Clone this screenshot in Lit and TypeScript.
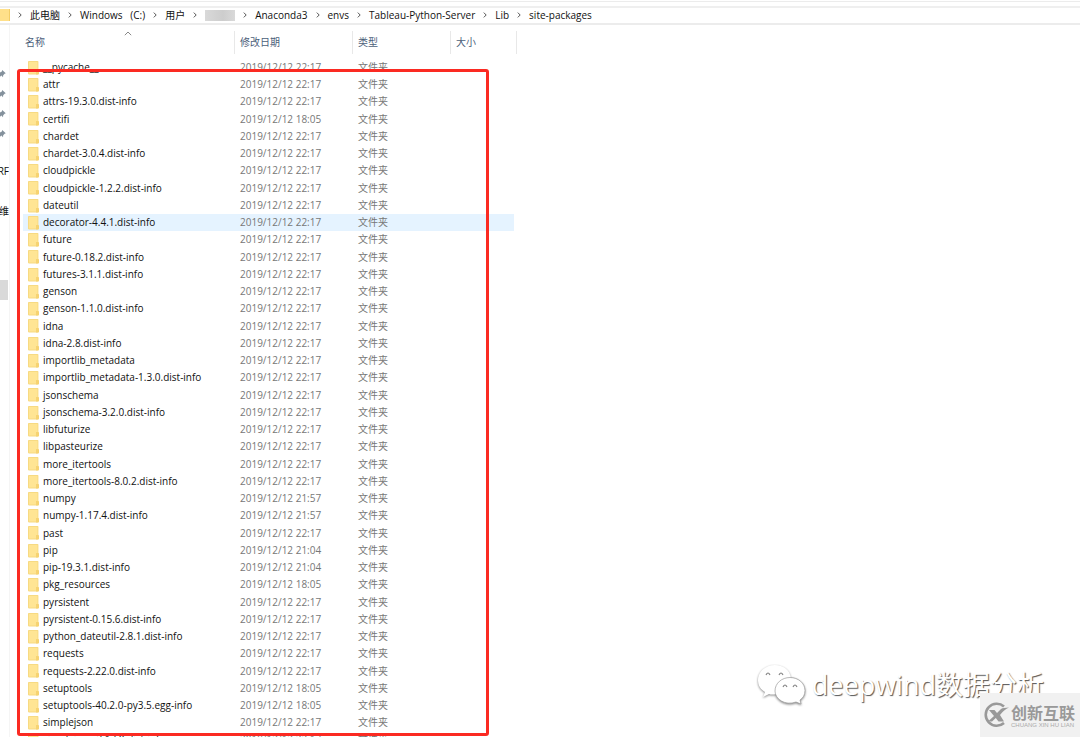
import { LitElement, html, css } from "lit";
import { customElement } from "lit/decorators.js";
import { classMap } from "lit/directives/class-map.js";

type Entry = [name: string, modified: string];

const D = "2019/12/12 22:17";
const before: Entry[] = [["__pycache__", D]];
const boxed: Entry[] = [
  ["attr", D],
  ["attrs-19.3.0.dist-info", D],
  ["certifi", "2019/12/12 18:05"],
  ["chardet", D],
  ["chardet-3.0.4.dist-info", D],
  ["cloudpickle", D],
  ["cloudpickle-1.2.2.dist-info", D],
  ["dateutil", D],
  ["decorator-4.4.1.dist-info", D],
  ["future", D],
  ["future-0.18.2.dist-info", D],
  ["futures-3.1.1.dist-info", D],
  ["genson", D],
  ["genson-1.1.0.dist-info", D],
  ["idna", D],
  ["idna-2.8.dist-info", D],
  ["importlib_metadata", D],
  ["importlib_metadata-1.3.0.dist-info", D],
  ["jsonschema", D],
  ["jsonschema-3.2.0.dist-info", D],
  ["libfuturize", D],
  ["libpasteurize", D],
  ["more_itertools", D],
  ["more_itertools-8.0.2.dist-info", D],
  ["numpy", "2019/12/12 21:57"],
  ["numpy-1.17.4.dist-info", "2019/12/12 21:57"],
  ["past", D],
  ["pip", "2019/12/12 21:04"],
  ["pip-19.3.1.dist-info", "2019/12/12 21:04"],
  ["pkg_resources", "2019/12/12 18:05"],
  ["pyrsistent", D],
  ["pyrsistent-0.15.6.dist-info", D],
  ["python_dateutil-2.8.1.dist-info", D],
  ["requests", D],
  ["requests-2.22.0.dist-info", D],
  ["setuptools", "2019/12/12 18:05"],
  ["setuptools-40.2.0-py3.5.egg-info", "2019/12/12 18:05"],
  ["simplejson", D],
];
const after: Entry[] = [["simplejson-3.17.0.dist-info", D]];
const SELECTED = "decorator-4.4.1.dist-info";
const CRUMBS = ["此电脑", "Windows   (C:)", "用户", "", "Anaconda3", "envs", "Tableau-Python-Server", "Lib", "site-packages"];

const folder = html`<svg class="folder" width="11" height="14" viewBox="0 0 11 14" aria-hidden="true">
  <rect width="10.400" height="13.400" rx=".8" fill="#f7d981" />
  <rect x=".9" y=".9" width="8.600" height="11.600" fill="#ffe594" />
  <path d="M8 9h2.200q.8 0 .8.7v3q0 .7-.8.7H8z" fill="#f6d372" />
</svg>`;

const pin = html`<svg class="pin" width="6" height="10" viewBox="0 0 6 10" aria-hidden="true">
  <path d="M2.200 1 5.800 4.200 4.600 4.700 3.200 6.200 3 8.200 1.400 6.600 0 7.800V3.400L1.900 2.600z" fill="#84919c" />
</svg>`;

const chevron = html`<svg class="chevron" width="4" height="6" viewBox="0 0 4 6" aria-hidden="true">
  <path d="M.8.6 3.200 3 .8 5.400" fill="none" stroke="#555" />
</svg>`;

@customElement("app-root")
export class AppRoot extends LitElement {
  static styles = css`
    :host {
      display: flex;
      flex-direction: column;
      height: 100vh;
      overflow: hidden;
      position: relative;
      background: #fff;
      color: #111;
      font: 10px/17px "Open Sans", "Noto Sans CJK SC", sans-serif;
    }
    .address {
      display: flex;
      align-items: center;
      flex: none;
      height: 16px;
      margin-top: 1px;
      border-top: 1px solid #ececec;
      box-shadow: inset 0 4px #fff, inset 0 6px #efefef;
      border-bottom: 2px solid #ececec;
      padding-top: 5px;
    }
    .crumbs {
      display: flex;
      align-items: center;
      margin: 0;
      padding: 0;
      list-style: none;
      white-space: pre;
    }
    .crumbs li {
      display: flex;
      align-items: center;
    }
    a {
      color: inherit;
      text-decoration: none;
    }
    .chevron {
      flex: none;
      margin: 0 8px;
    }
    .home {
      width: 10px;
      height: 12px;
      background: #ffe08a;
      border-right: 1px solid #f3cd66;
      box-sizing: border-box;
    }
    .hidden-name {
      width: 30px;
      height: 11px;
      background: linear-gradient(90deg, #d9d9d9, #cdcdcd 60%, #d9d9d9);
    }
    .main {
      display: flex;
      flex: 1;
      min-height: 0;
    }
    .side {
      flex: none;
      width: 10px;
      border-right: 1px solid #f5f5f5;
      box-sizing: border-box;
      overflow: hidden;
      padding-top: 44px;
    }
    .pin {
      display: block;
      margin-bottom: 10px;
    }
    .cut {
      display: flex;
      justify-content: flex-end;
      width: 9px;
      height: 17px;
      margin-top: 24px;
      overflow: hidden;
    }
    .cut + .cut {
      margin-top: 23px;
    }
    .thumb {
      width: 8px;
      height: 20px;
      margin-top: 60px;
      background: #d9d9d9;
    }
    .list {
      flex: 1;
      min-width: 0;
      overflow: hidden;
    }
    .files,
    .files thead,
    .files tbody {
      display: block;
    }
    .row,
    .head {
      display: grid;
      grid-template-columns: 211px 118px 98px 66px;
    }
    .head {
      position: relative;
      height: 23px;
      padding: 6px 0 5px 14px;
      line-height: 23px;
      color: #4c607a;
    }
    .head th {
      border-right: 1px solid #e8e8e8;
      padding: 0 0 0 5px;
      font-weight: 400;
      text-align: left;
    }
    .head th:first-child {
      padding-left: 1px;
    }
    .sort {
      position: absolute;
      left: 114px;
      top: 6px;
    }
    .row {
      height: 17px;
      width: 491px;
      margin-left: 13px;
      align-items: center;
    }
    .row:nth-child(4n + 3) {
      height: 18px;
    }
    .row.selected {
      background: #e5f3ff;
    }
    .row td {
      padding: 0 0 0 6px;
      color: #777;
      white-space: nowrap;
    }
    .row .name {
      display: flex;
      align-items: center;
      gap: 4px;
      padding-left: 5px;
      color: #111;
    }
    .folder {
      flex: none;
    }
    .group {
      position: relative;
    }
    .group::after {
      content: "";
      position: absolute;
      inset: -7px auto -5px 7px;
      width: 472px;
      box-sizing: border-box;
      border: 3px solid #fb2a22;
      border-radius: 3px;
      pointer-events: none;
      z-index: 1;
    }
    .account {
      position: absolute;
      right: 36px;
      bottom: 31px;
      display: flex;
      align-items: center;
      gap: 5px;
      color: #fff;
      font-size: 27px;
      line-height: 40px;
      text-shadow: 1px 1px 1px #555;
    }
    .wechat {
      filter: drop-shadow(0 1px 1px #888);
    }
    .brand {
      position: absolute;
      right: 0;
      bottom: 0;
      width: 100px;
      height: 44px;
      box-sizing: border-box;
      padding-left: 3px;
      display: flex;
      align-items: center;
      gap: 2px;
      background: #f1f1f1;
      color: #999;
    }
    .brand b {
      display: block;
      font: 700 16px/20px "Noto Sans CJK SC", sans-serif;
    }
    .brand small {
      display: block;
      font: 6px/6px "Liberation Sans", sans-serif;
      color: #aaa;
      white-space: nowrap;
    }
  `;

  private row([name, date]: Entry) {
    return html`<tr class=${classMap({ row: true, selected: name === SELECTED })}>
      <td class="name">${folder}${name}</td>
      <td>${date}</td>
      <td>文件夹</td>
    </tr>`;
  }

  render() {
    return html`
      <nav class="address">
        <span class="home"></span>
        <ul class="crumbs">
          ${CRUMBS.map((c) => html`<li>${chevron}${c ? html`<a href="#">${c}</a>` : html`<span class="hidden-name"></span>`}</li>`)}
        </ul>
      </nav>
      <div class="main">
        <aside class="side">
          ${pin}${pin}${pin}${pin}
          <div class="cut">RF</div>
          <div class="cut">维</div>
          <div class="thumb"></div>
        </aside>
        <section class="list">
          <table class="files">
            <thead>
              <tr class="head">
                <th>
                  名称
                  <svg class="sort" width="8" height="5" viewBox="0 0 8 5" aria-hidden="true">
                    <path d="M.8 4.200 4 1l3.200 3.200" fill="none" stroke="#888" />
                  </svg>
                </th>
                <th>修改日期</th>
                <th>类型</th>
                <th>大小</th>
              </tr>
            </thead>
            <tbody>${before.map((r) => this.row(r))}</tbody>
            <tbody class="group">${boxed.map((r) => this.row(r))}</tbody>
            <tbody>${after.map((r) => this.row(r))}</tbody>
          </table>
        </section>
      </div>
      <div class="account">
        <svg class="wechat" width="50" height="42" viewBox="0 0 50 42" aria-hidden="true">
          <path d="M18 1C8 1 1 8 1 16C1 21 3 25 8 28L6 33 12 30Q15 31 19 30L34 14C33 6 26 1 18 1Z" fill="#fff" />
          <path d="M18 27C18 19 25 13.500 33 13.500C41 13.500 48 19 48 26.500 48 31 46 34 43 36L44 40 39 38C28 42 18 35 18 27Z" fill="#fff" stroke="#999" stroke-width=".7" />
          <path d="M9 11q2-4 4 0M22 11q2-4 4 0M26 23q2-4 4 0M36 23q2-4 4 0" fill="none" stroke="#888" stroke-width="1.200" />
        </svg>
        deepwind数据分析
      </div>
      <div class="brand">
        <svg width="26" height="26" viewBox="0 0 26 26" aria-hidden="true">
          <path d="M21 4.500A11 11 0 1 0 21 21" fill="none" stroke="#999" stroke-width="2.600" />
          <path d="M6 8h5.500l2.500 3 4-4Q20 5.500 26 5.500Q21 7.500 17 13l4 6.500h-5.500L12.800 16 9 19.500H5L11 14z" fill="#999" />
        </svg>
        <span><b>创新互联</b><small>CHUANG XIN HU LIAN</small></span>
      </div>
    `;
  }
}
